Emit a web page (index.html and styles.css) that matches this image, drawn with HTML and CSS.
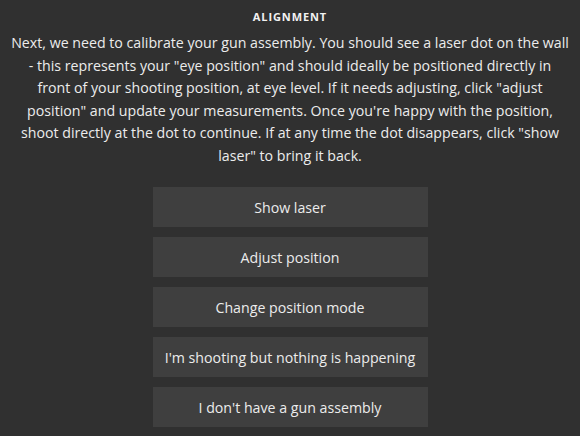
FILE: index.html
```html
<!DOCTYPE html>
<html>
<head>
<meta charset="utf-8">
<link rel="stylesheet" href="styles.css">
</head>
<body>
<main class="panel">
  <h1 class="title">ALIGNMENT</h1>
  <p class="intro">Next, we need to calibrate your gun assembly. You should see a laser dot on the wall<br>- this represents your "eye position" and should ideally be positioned directly in<br>front of your shooting position, at eye level. If it needs adjusting, click "adjust<br>position" and update your measurements. Once you're happy with the position,<br>shoot directly at the dot to continue. If at any time the dot disappears, click "show<br>laser" to bring it back.</p>
  <div class="actions">
    <button class="btn">Show laser</button>
    <button class="btn">Adjust position</button>
    <button class="btn">Change position mode</button>
    <button class="btn">I'm shooting but nothing is happening</button>
    <button class="btn">I don't have a gun assembly</button>
  </div>
</main>
</body>
</html>
```
FILE: styles.css
```css
html, body {
  margin: 0;
  padding: 0;
  background: #303030;
}
.panel {
  width: 580px;
  height: 436px;
  box-sizing: border-box;
  padding: 9px 0 0;
  display: flex;
  flex-direction: column;
  align-items: center;
  font-family: "Open Sans", "Noto Sans", sans-serif;
  color: #ececec;
}
.title {
  margin: 0;
  font-size: 11px;
  font-weight: 700;
  letter-spacing: 0.9px;
  line-height: 16px;
  color: #f2f2f2;
}
.intro {
  margin: 7px 0 0;
  font-size: 14.2px;
  line-height: 22.5px;
  text-align: center;
  white-space: nowrap;
}
.actions {
  margin-top: 20px;
  display: flex;
  flex-direction: column;
  gap: 10px;
}
.btn {
  width: 275px;
  height: 40px;
  border: none;
  background: #3f3f3f;
  color: #ececec;
  font-family: inherit;
  font-size: 14.2px;
  padding: 0;
}
```
